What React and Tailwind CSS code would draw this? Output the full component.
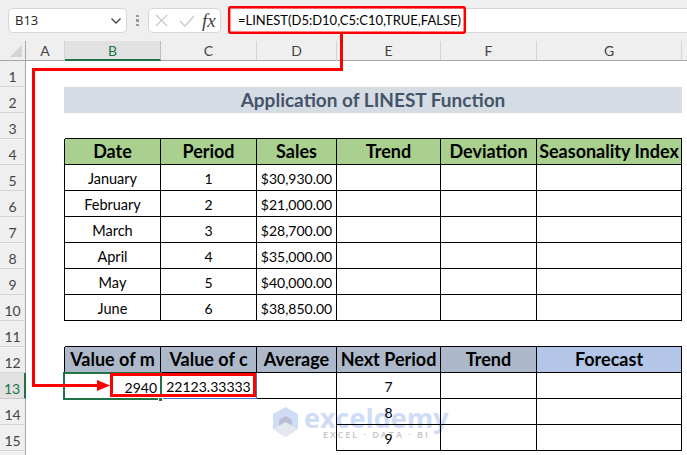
const FONT = "font-['Lato','Carlito','Liberation_Sans',sans-serif]";

function RowHead({ n, active }) {
  return (
    <div
      className={
        active
          ? "flex items-center justify-center pt-[6px] bg-[#e1e1e1] border-b border-[#c8c8c8] border-r-2 border-r-[#217346] text-[#217346] text-[14px]"
          : "flex items-center justify-center pt-[6px] bg-[#efefef] border-b border-[#d4d4d4] border-r border-r-[#a6a6a6] text-[#444] text-[14px]"
      }
    >
      {n}
    </div>
  );
}

function ColHead({ label, active, last }) {
  return (
    <div
      className={
        active
          ? "flex items-center justify-center bg-[#e1e1e1] border-b-2 border-[#217346] border-r border-r-[#bdbdbd] text-[#217346] text-[14px]"
          : last
          ? "bg-[#efefef] border-b border-[#a6a6a6]"
          : "flex items-center justify-center bg-[#efefef] border-b border-[#a6a6a6] border-r border-r-[#d4d4d4] text-[#444] text-[14px]"
      }
    >
      {label}
    </div>
  );
}

const Blank = () => <div />;
const LineB = () => <div className="border-b border-black" />;
const EdgeR = () => <div className="border-r border-black" />;

function Cell({ children }) {
  return (
    <div className="flex items-center justify-center pt-[2px] border-r border-b border-black text-[14px] text-black whitespace-nowrap">
      {children}
    </div>
  );
}

function Head({ children, tone }) {
  return (
    <div
      className={
        tone === "green"
          ? "flex items-center justify-center border-r border-b border-black bg-[#a9d08e] font-bold text-[18px] text-black whitespace-nowrap"
          : tone === "slate"
          ? "flex items-center justify-center border-r border-b border-black bg-[#adb9ca] font-bold text-[18px] text-black whitespace-nowrap"
          : "flex items-center justify-center border-r border-b border-black bg-[#b4c6e7] font-bold text-[18px] text-black whitespace-nowrap"
      }
    >
      {children}
    </div>
  );
}

const months = [
  ["January", "1", "$30,930.00"],
  ["February", "2", "$21,000.00"],
  ["March", "3", "$28,700.00"],
  ["April", "4", "$35,000.00"],
  ["May", "5", "$40,000.00"],
  ["June", "6", "$38,850.00"],
];

export default function App() {
  return (
    <div className={"relative w-[687px] h-[455px] overflow-hidden bg-white " + FONT}>
      {/* formula bar */}
      <div className="relative z-10 flex items-center h-[41px] bg-[#efefef] pl-2">
        <div className="flex items-center justify-between w-[119px] h-[25px] bg-white border border-[#d6d6d6] rounded-[5px] pl-[6px] pr-[4px] text-[13px] text-[#222] font-['Open_Sans',sans-serif]">
          <span>B13</span>
          <svg width="12" height="8" viewBox="0 0 12 8" fill="none" stroke="#444" strokeWidth="1.3">
            <path d="M1.5 1.5 6 6l4.5-4.5" />
          </svg>
        </div>
        <div className="flex flex-col gap-[2px] w-[3px] ml-[9px] mr-[9px]">
          <span className="w-[3px] h-[2.5px] bg-[#9a9a9a]" />
          <span className="w-[3px] h-[2.5px] bg-[#9a9a9a]" />
          <span className="w-[3px] h-[2.5px] bg-[#9a9a9a]" />
        </div>
        <div className="flex items-center w-[73px] h-[25px] bg-white border border-[#d6d6d6] rounded-[5px] pl-[6px]">
          <svg width="13" height="13" viewBox="0 0 13 13" fill="none" stroke="#c9c9c9" strokeWidth="1.3">
            <path d="M1 1l11 11M12 1 1 12" />
          </svg>
          <svg className="ml-[11px]" width="16" height="12" viewBox="0 0 16 12" fill="none" stroke="#c9c9c9" strokeWidth="1.3">
            <path d="M1 6l5 5L15 1" />
          </svg>
          <span className="ml-[7px] font-['Liberation_Serif',serif] italic font-normal text-[19px] leading-none text-[#444]">fx</span>
        </div>
        <div className="flex items-center flex-1 h-[25px] ml-[7px] bg-white border-y border-[#d6d6d6] pl-[10px] text-[13px] text-black whitespace-nowrap">
          =LINEST(D5:D10,C5:C10,TRUE,FALSE)
        </div>
      </div>

      {/* sheet */}
      <div className="relative z-10 grid grid-cols-[26px_39px_96px_96px_80px_104px_96px_145px_5px] grid-rows-[20px] auto-rows-[26px]">
        {/* column letters */}
        <div className="flex items-end justify-end pr-[3px] pb-[3px] bg-[#efefef] border-b border-r border-[#a6a6a6]">
          <svg width="12" height="12" viewBox="0 0 12 12">
            <path d="M12 0v12H0z" fill="#d4d4d4" />
          </svg>
        </div>
        <ColHead label="A" />
        <ColHead label="B" active />
        <ColHead label="C" />
        <ColHead label="D" />
        <ColHead label="E" />
        <ColHead label="F" />
        <ColHead label="G" />
        <ColHead last />

        {/* 1 */}
        <RowHead n="1" />
        <Blank /><Blank /><Blank /><Blank /><Blank /><Blank /><Blank /><Blank />

        {/* 2 */}
        <RowHead n="2" />
        <Blank />
        <div className="col-span-6 -ml-px flex items-center justify-center bg-[#d6dce4] font-bold text-[19px] text-[#44546a]">
          Application of LINEST Function
        </div>
        <Blank />

        {/* 3 */}
        <RowHead n="3" />
        <Blank />
        <LineB /><LineB /><LineB /><LineB /><LineB /><LineB />
        <Blank />

        {/* 4 */}
        <RowHead n="4" />
        <EdgeR />
        <Head tone="green">Date</Head>
        <Head tone="green">Period</Head>
        <Head tone="green">Sales</Head>
        <Head tone="green">Trend</Head>
        <Head tone="green">Deviation</Head>
        <Head tone="green">Seasonality Index</Head>
        <Blank />

        {/* 5-10 */}
        {months.map((m, i) => [
          <RowHead key={"h" + i} n={String(i + 5)} />,
          <EdgeR key={"a" + i} />,
          <Cell key={"b" + i}><span className="text-[14.5px]">{m[0]}</span></Cell>,
          <Cell key={"c" + i}>{m[1]}</Cell>,
          <Cell key={"d" + i}>{m[2]}</Cell>,
          <Cell key={"e" + i} />,
          <Cell key={"f" + i} />,
          <Cell key={"g" + i} />,
          <Blank key={"i" + i} />,
        ])}

        {/* 11 */}
        <RowHead n="11" />
        <Blank />
        <LineB /><LineB /><LineB /><LineB /><LineB /><LineB />
        <Blank />

        {/* 12 */}
        <RowHead n="12" />
        <EdgeR />
        <Head tone="slate">Value of m</Head>
        <Head tone="slate">Value of c</Head>
        <Head tone="slate">Average</Head>
        <Head tone="slate">Next Period</Head>
        <Head tone="slate">Trend</Head>
        <Head tone="blue">Forecast</Head>
        <Blank />

        {/* 13 */}
        <RowHead n="13" active />
        <Blank />
        <div className="relative flex items-center justify-end pr-[4px] pt-[2px] text-[14px] text-black">
          2940
          <div className="absolute -left-[2px] -top-[1px] -right-px -bottom-px border-2 border-[#217346]" />
          <div className="absolute -right-[2px] -bottom-[3px] w-[5px] h-[5px] bg-[#217346] border border-white" />
        </div>
        <div className="flex items-center justify-center pt-[2px] border-r border-b border-[#4472c4] text-[14px] text-black">
          22123.33333
        </div>
        <Cell />
        <Cell>7</Cell>
        <Cell />
        <Cell />
        <Blank />

        {/* 14 */}
        <RowHead n="14" />
        <Blank /><Blank /><Blank />
        <EdgeR />
        <Cell>8</Cell>
        <Cell />
        <Cell />
        <Blank />

        {/* 15 */}
        <RowHead n="15" />
        <Blank /><Blank /><Blank />
        <EdgeR />
        <Cell>9</Cell>
        <Cell />
        <Cell />
        <Blank />

        {/* 16 */}
        <RowHead n="" />
      </div>

      {/* watermark, behind the transparent cells */}
      <div className="absolute z-0 left-[272px] top-[406px] flex items-start gap-[5px] pointer-events-none">
        <svg width="27" height="32" viewBox="0 0 27 32">
          <path d="M13.5 1 26 8v15l-12.500 8L1 23V8z" fill="#cfdcf6" />
          <path d="M13.500 10 20 14v7l-6.500 4L7 21v-7z" fill="#a9a9b5" opacity="0.6" />
          <path d="M1 23l12.500-7L26 23l-12.500 8z" fill="#e3e8f0" />
        </svg>
        <div className="flex flex-col items-center">
          <span className="font-['Open_Sans',sans-serif] font-bold text-[27px] leading-[24px] text-[#cfdcf8]">exceldemy</span>
          <span className="font-['Open_Sans',sans-serif] font-semibold text-[9px] leading-[10px] tracking-[2px] text-[#c4c4c4]">EXCEL · DATA · BI</span>
        </div>
      </div>

      {/* red callouts */}
      <svg className="absolute z-20 left-0 top-0 pointer-events-none" width="687" height="455" viewBox="0 0 687 455" fill="none">
        <rect x="229.200" y="7.200" width="235.600" height="25.600" rx="1.500" stroke="#ff0000" strokeWidth="2.500" />
        <rect x="111.500" y="374.500" width="143" height="21" stroke="#ff0000" strokeWidth="3" />
        <path d="M341.500 33V69.500H33.500V385.500H99" stroke="#ff0000" strokeWidth="3" />
        <path d="M110 385.500 97 380v11z" fill="#ff0000" />
      </svg>
    </div>
  );
}
